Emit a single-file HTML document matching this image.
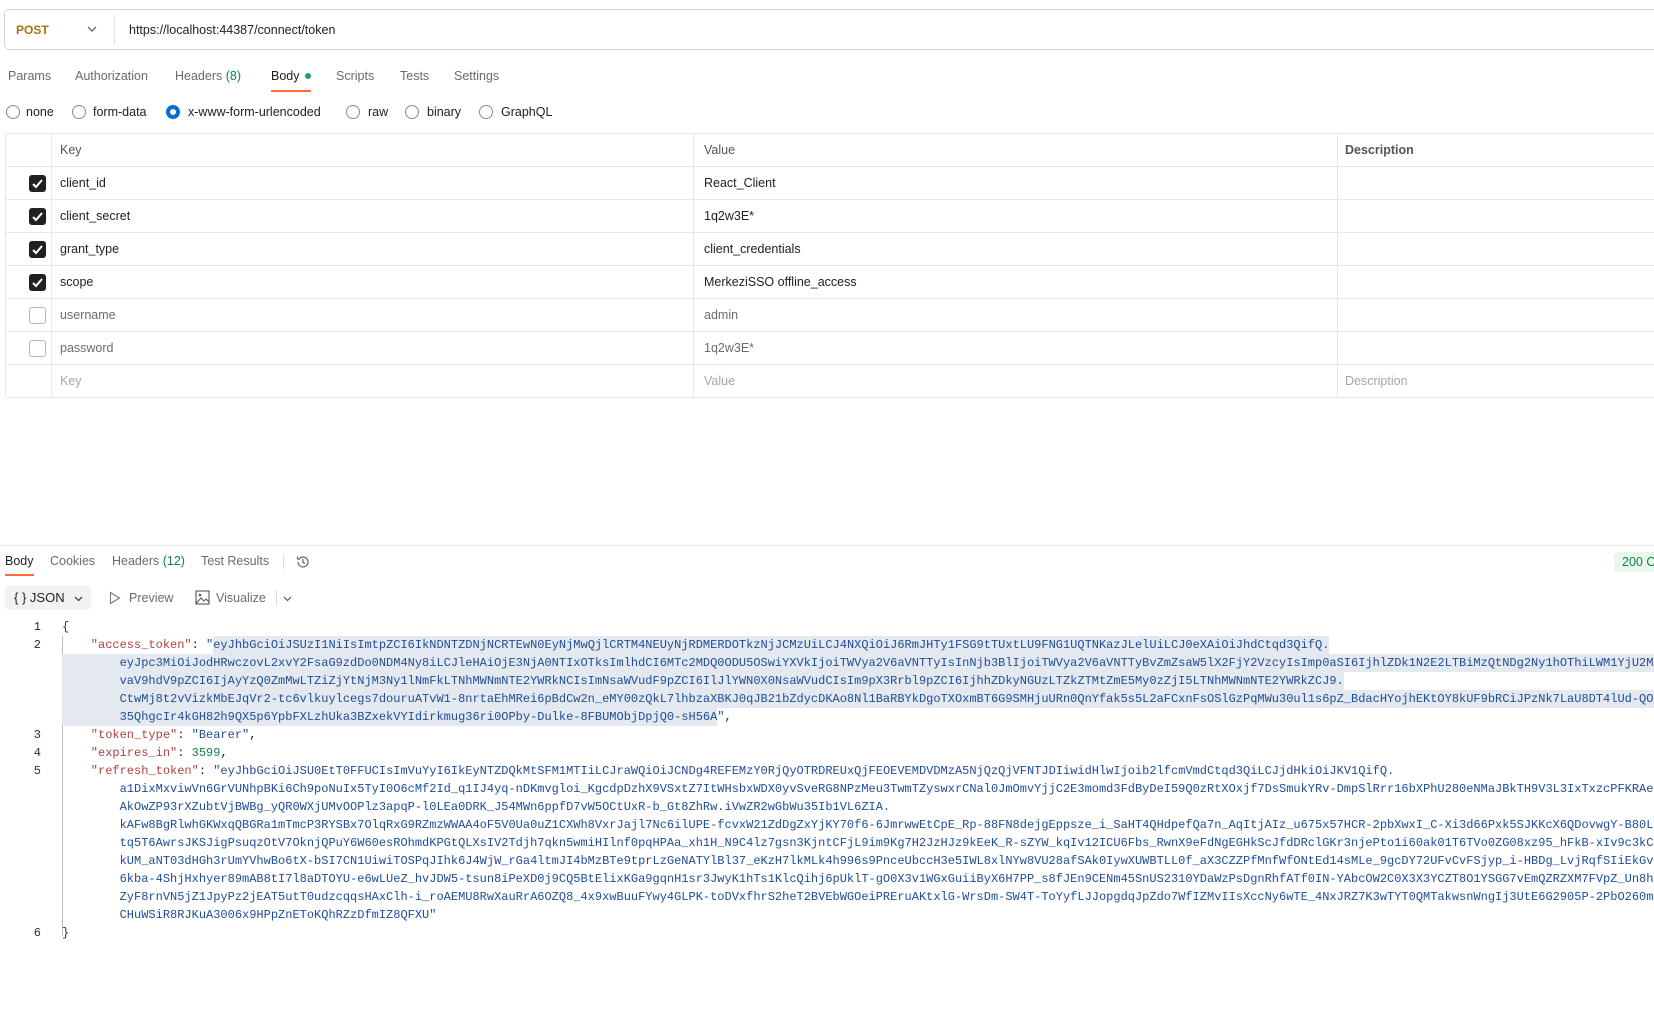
<!DOCTYPE html>
<html><head><meta charset="utf-8"><style>
*{box-sizing:border-box;margin:0;padding:0}
body{width:1654px;height:1026px;overflow:hidden;background:#fff;font-family:"Liberation Sans",sans-serif;font-size:12.5px;color:#212121;position:relative}
.a{position:absolute;white-space:nowrap}
.urlbar{left:4px;top:9px;width:1700px;height:41px;border:1px solid #d4d4d4;border-radius:5px}
.tab{color:#6b6b6b;font-size:12.5px}
.radio{width:14px;height:14px;border:1px solid #8a8a8a;border-radius:50%;position:absolute}
.table{left:5px;top:133px;width:1700px}
.row{position:absolute;left:0;width:1700px;height:33px;border-bottom:1px solid #e8e8e8}
.cell{position:absolute;top:0;height:33px;line-height:33px;font-size:12.5px}
.vl{position:absolute;top:0;width:1px;height:264px;background:#e8e8e8}
.cb{position:absolute;left:23px;top:8px;width:17px;height:17px;border-radius:3px;background:#212121}
.cb.u{background:#fff;border:1px solid #b5b5b5}
.ln{position:absolute;left:0;width:41px;text-align:right;color:#1d2d50;font-family:"Liberation Mono",monospace;font-size:12px;height:18px;line-height:18px}
.cr{position:absolute;left:62px;height:18px;line-height:18px;white-space:pre;font-family:"Liberation Mono",monospace;font-size:12px}
.sel{background:#e4e8ef;display:inline-block;height:18px}
.k{color:#b0413e}.s{color:#1f4d98}.n{color:#13804a}.p{color:#333}
</style></head><body>

<div class="a urlbar"></div>
<div class="a" style="left:16px;top:23px;font-weight:bold;color:#a8740c;font-size:12px">POST</div>
<svg class="a" style="left:87px;top:26px" width="10" height="6"><path d="M1 1L5 5L9 1" stroke="#555" fill="none" stroke-width="1.2"/></svg>
<div class="a" style="left:114px;top:15px;width:1px;height:29px;background:#e2e2e2"></div>
<div class="a" style="left:129px;top:23px;font-size:12.5px">https://localhost:44387/connect/token</div>

<div class="a tab" style="left:8px;top:69px">Params</div>
<div class="a tab" style="left:75px;top:69px">Authorization</div>
<div class="a tab" style="left:175px;top:69px">Headers <span style="color:#13804a">(8)</span></div>
<div class="a" style="left:271px;top:69px;color:#212121">Body</div>
<div class="a" style="left:305px;top:73px;width:6px;height:6px;border-radius:50%;background:#1fa35b"></div>
<div class="a" style="left:271px;top:90px;width:40px;height:2px;background:#ff6c37"></div>
<div class="a tab" style="left:336px;top:69px">Scripts</div>
<div class="a tab" style="left:400px;top:69px">Tests</div>
<div class="a tab" style="left:454px;top:69px">Settings</div>

<div class="radio" style="left:6px;top:105px"></div><div class="a" style="left:26px;top:105px">none</div>
<div class="radio" style="left:72px;top:105px"></div><div class="a" style="left:93px;top:105px">form-data</div>
<div class="radio" style="left:166px;top:105px;border:4px solid #0c6ad8"></div><div class="a" style="left:188px;top:105px">x-www-form-urlencoded</div>
<div class="radio" style="left:346px;top:105px"></div><div class="a" style="left:368px;top:105px">raw</div>
<div class="radio" style="left:405px;top:105px"></div><div class="a" style="left:427px;top:105px">binary</div>
<div class="radio" style="left:479px;top:105px"></div><div class="a" style="left:501px;top:105px">GraphQL</div>

<div class="a table" style="height:264px;border-top:1px solid #e8e8e8;border-left:1px solid #e8e8e8">
 <div class="vl" style="left:45px"></div><div class="vl" style="left:687px"></div><div class="vl" style="left:1331px"></div>
 <div class="row" style="top:0"><div class="cell" style="left:54px;color:#555">Key</div><div class="cell" style="left:698px;color:#555">Value</div><div class="cell" style="left:1339px;color:#555;font-weight:bold">Description</div></div>
 <div class="row" style="top:33px"><div class="cb"><svg width="17" height="17"><path d="M4 9l3 3 6-7" stroke="#fff" stroke-width="2" fill="none"/></svg></div><div class="cell" style="left:54px">client_id</div><div class="cell" style="left:698px">React_Client</div></div>
 <div class="row" style="top:66px"><div class="cb"><svg width="17" height="17"><path d="M4 9l3 3 6-7" stroke="#fff" stroke-width="2" fill="none"/></svg></div><div class="cell" style="left:54px">client_secret</div><div class="cell" style="left:698px">1q2w3E*</div></div>
 <div class="row" style="top:99px"><div class="cb"><svg width="17" height="17"><path d="M4 9l3 3 6-7" stroke="#fff" stroke-width="2" fill="none"/></svg></div><div class="cell" style="left:54px">grant_type</div><div class="cell" style="left:698px">client_credentials</div></div>
 <div class="row" style="top:132px"><div class="cb"><svg width="17" height="17"><path d="M4 9l3 3 6-7" stroke="#fff" stroke-width="2" fill="none"/></svg></div><div class="cell" style="left:54px">scope</div><div class="cell" style="left:698px">MerkeziSSO offline_access</div></div>
 <div class="row" style="top:165px"><div class="cb u"></div><div class="cell" style="left:54px;color:#6b6b6b">username</div><div class="cell" style="left:698px;color:#6b6b6b">admin</div></div>
 <div class="row" style="top:198px"><div class="cb u"></div><div class="cell" style="left:54px;color:#6b6b6b">password</div><div class="cell" style="left:698px;color:#6b6b6b">1q2w3E*</div></div>
 <div class="row" style="top:231px"><div class="cell" style="left:54px;color:#a6a6a6">Key</div><div class="cell" style="left:698px;color:#a6a6a6">Value</div><div class="cell" style="left:1339px;color:#a6a6a6">Description</div></div>
</div>

<div class="a" style="left:0;top:545px;width:1654px;height:1px;background:#ebebeb"></div>
<div class="a" style="left:5px;top:554px">Body</div>
<div class="a" style="left:5px;top:574px;width:29px;height:2px;background:#ff6c37"></div>
<div class="a tab" style="left:50px;top:554px">Cookies</div>
<div class="a tab" style="left:112px;top:554px">Headers <span style="color:#13804a">(12)</span></div>
<div class="a tab" style="left:201px;top:554px">Test Results</div>
<div class="a" style="left:283px;top:555px;width:1px;height:14px;background:#ddd"></div>
<svg class="a" style="left:295px;top:554px" width="16" height="16" viewBox="0 0 16 16"><path d="M3 8a5 5 0 1 0 1.5-3.6" stroke="#666" fill="none" stroke-width="1.2"/><path d="M2.5 2.5v2.5h2.5" stroke="#666" fill="none" stroke-width="1.2"/><path d="M8 5v3.3l2 1.5" stroke="#666" fill="none" stroke-width="1.2"/></svg>
<div class="a" style="left:1614px;top:552px;width:60px;height:20px;background:#e7f7ec;border-radius:4px;color:#13804a;line-height:20px;padding-left:8px">200 OK</div>

<div class="a" style="left:5px;top:586px;width:86px;height:24px;background:#f2f2f2;border-radius:4px"></div>
<div class="a" style="left:14px;top:590px;font-size:13px">{ }&nbsp;JSON</div>
<svg class="a" style="left:74px;top:596px" width="9" height="6"><path d="M1 1L4.5 4.5L8 1" stroke="#333" fill="none" stroke-width="1.2"/></svg>
<svg class="a" style="left:109px;top:591px" width="12" height="14"><path d="M1.5 1.5L10.5 7L1.5 12.5Z" stroke="#777" fill="none" stroke-width="1.1"/></svg>
<div class="a tab" style="left:129px;top:591px">Preview</div>
<svg class="a" style="left:195px;top:590px" width="15" height="15"><rect x="1" y="1" width="13" height="13" stroke="#555" fill="none" stroke-width="1.1"/><path d="M1.5 13L6 8l3 3 2-2 3 3" stroke="#555" fill="none" stroke-width="1.1"/><circle cx="5" cy="5" r="1.3" fill="#555"/></svg>
<div class="a tab" style="left:216px;top:591px">Visualize</div>
<div class="a" style="left:276px;top:590px;width:1px;height:16px;background:#ddd"></div>
<svg class="a" style="left:283px;top:596px" width="9" height="6"><path d="M1 1L4.5 4.5L8 1" stroke="#555" fill="none" stroke-width="1.2"/></svg>

<div class="a" style="left:62px;top:636px;width:1px;height:300px;background:#bbb"></div>

<div class="ln" style="top:618px">1</div><div class="cr p" style="top:618px">{</div>
<div class="ln" style="top:636px">2</div>
<div class="cr" style="top:636px"><span class="k">    "access_token"</span>: <span class="s">"</span><span class="sel s">eyJhbGciOiJSUzI1NiIsImtpZCI6IkNDNTZDNjNCRTEwN0EyNjMwQjlCRTM4NEUyNjRDMERDOTkzNjJCMzUiLCJ4NXQiOiJ6RmJHTy1FSG9tTUxtLU9FNG1UQTNKazJLelUiLCJ0eXAiOiJhdCtqd3QifQ.</span></div>
<div class="cr s" style="top:654px"><span class="sel">        eyJpc3MiOiJodHRwczovL2xvY2FsaG9zdDo0NDM4Ny8iLCJleHAiOjE3NjA0NTIxOTksImlhdCI6MTc2MDQ0ODU5OSwiYXVkIjoiTWVya2V6aVNTTyIsInNjb3BlIjoiTWVya2V6aVNTTyBvZmZsaW5lX2FjY2VzcyIsImp0aSI6IjhlZDk1N2E2LTBiMzQtNDg2Ny1hOThiLWM1YjU2MzUxYjc4ZSIs</span></div>
<div class="cr s" style="top:672px"><span class="sel">        vaV9hdV9pZCI6IjAyYzQ0ZmMwLTZiZjYtNjM3Ny1lNmFkLTNhMWNmNTE2YWRkNCIsImNsaWVudF9pZCI6IlJlYWN0X0NsaWVudCIsIm9pX3Rrbl9pZCI6IjhhZDkyNGUzLTZkZTMtZmE5My0zZjI5LTNhMWNmNTE2YWRkZCJ9.</span></div>
<div class="cr s" style="top:690px"><span class="sel">        CtwMj8t2vVizkMbEJqVr2-tc6vlkuylcegs7douruATvW1-8nrtaEhMRei6pBdCw2n_eMY00zQkL7lhbzaXBKJ0qJB21bZdycDKAo8Nl1BaRBYkDgoTXOxmBT6G9SMHjuURn0QnYfak5s5L2aFCxnFsOSlGzPqMWu30ul1s6pZ_BdacHYojhEKtOY8kUF9bRCiJPzNk7LaU8DT4lUd-QOdx2</span></div>
<div class="cr s" style="top:708px"><span class="sel">        35QhgcIr4kGH82h9QX5p6YpbFXLzhUka3BZxekVYIdirkmug36ri0OPby-Dulke-8FBUMObjDpjQ0-sH56A</span>"<span class="p">,</span></div>
<div class="ln" style="top:726px">3</div><div class="cr" style="top:726px"><span class="k">    "token_type"</span>: <span class="s">"Bearer"</span>,</div>
<div class="ln" style="top:744px">4</div><div class="cr" style="top:744px"><span class="k">    "expires_in"</span>: <span class="n">3599</span>,</div>
<div class="ln" style="top:762px">5</div><div class="cr" style="top:762px"><span class="k">    "refresh_token"</span>: <span class="s">"eyJhbGciOiJSU0EtT0FFUCIsImVuYyI6IkEyNTZDQkMtSFM1MTIiLCJraWQiOiJCNDg4REFEMzY0RjQyOTRDREUxQjFEOEVEMDVDMzA5NjQzQjVFNTJDIiwidHlwIjoib2lfcmVmdCtqd3QiLCJjdHkiOiJKV1QifQ.</span></div>
<div class="cr s" style="top:780px">        a1DixMxviwVn6GrVUNhpBKi6Ch9poNuIx5TyI0O6cMf2Id_q1IJ4yq-nDKmvgloi_KgcdpDzhX9VSxtZ7ItWHsbxWDX0yvSveRG8NPzMeu3TwmTZyswxrCNal0JmOmvYjjC2E3momd3FdByDeI59Q0zRtXOxjf7DsSmukYRv-DmpSlRrr16bXPhU280eNMaJBkTH9V3L3IxTxzcPFKRAe7k</div>
<div class="cr s" style="top:798px">        AkOwZP93rXZubtVjBWBg_yQR0WXjUMvOOPlz3apqP-l0LEa0DRK_J54MWn6ppfD7vW5OCtUxR-b_Gt8ZhRw.iVwZR2wGbWu35Ib1VL6ZIA.</div>
<div class="cr s" style="top:816px">        kAFw8BgRlwhGKWxqQBGRa1mTmcP3RYSBx7OlqRxG9RZmzWWAA4oF5V0Ua0uZ1CXWh8VxrJajl7Nc6ilUPE-fcvxW21ZdDgZxYjKY70f6-6JmrwwEtCpE_Rp-88FN8dejgEppsze_i_SaHT4QHdpefQa7n_AqItjAIz_u675x57HCR-2pbXwxI_C-Xi3d66Pxk5SJKKcX6QDovwgY-B80Lq</div>
<div class="cr s" style="top:834px">        tq5T6AwrsJKSJigPsuqzOtV7OknjQPuY6W60esROhmdKPGtQLXsIV2Tdjh7qkn5wmiHIlnf0pqHPAa_xh1H_N9C4lz7gsn3KjntCFjL9im9Kg7H2JzHJz9kEeK_R-sZYW_kqIv12ICU6Fbs_RwnX9eFdNgEGHkScJfdDRclGKr3njePto1i60ak01T6TVo0ZG08xz95_hFkB-xIv9c3kCa</div>
<div class="cr s" style="top:852px">        kUM_aNT03dHGh3rUmYVhwBo6tX-bSI7CN1UiwiTOSPqJIhk6J4WjW_rGa4ltmJI4bMzBTe9tprLzGeNATYlBl37_eKzH7lkMLk4h996s9PnceUbccH3e5IWL8xlNYw8VU28afSAk0IywXUWBTLL0f_aX3CZZPfMnfWfONtEd14sMLe_9gcDY72UFvCvFSjyp_i-HBDg_LvjRqfSIiEkGvr</div>
<div class="cr s" style="top:870px">        6kba-4ShjHxhyer89mAB8tI7l8aDTOYU-e6wLUeZ_hvJDW5-tsun8iPeXD0j9CQ5BtElixKGa9gqnH1sr3JwyK1hTs1KlcQihj6pUklT-gO0X3v1WGxGuiiByX6H7PP_s8fJEn9CENm45SnUS2310YDaWzPsDgnRhfATf0IN-YAbcOW2C0X3X3YCZT8O1YSGG7vEmQZRZXM7FVpZ_Un8h</div>
<div class="cr s" style="top:888px">        ZyF8rnVN5jZ1JpyPz2jEAT5utT0udzcqqsHAxClh-i_roAEMU8RwXauRrA6OZQ8_4x9xwBuuFYwy4GLPK-toDVxfhrS2heT2BVEbWGOeiPREruAKtxlG-WrsDm-SW4T-ToYyfLJJopgdqJpZdo7WfIZMvIIsXccNy6wTE_4NxJRZ7K3wTYT0QMTakwsnWngIj3UtE6G2905P-2PbO260m</div>
<div class="cr s" style="top:906px">        CHuWSiR8RJKuA3006x9HPpZnEToKQhRZzDfmIZ8QFXU"</div>
<div class="ln" style="top:924px">6</div><div class="cr p" style="top:924px">}</div>
</body></html>
